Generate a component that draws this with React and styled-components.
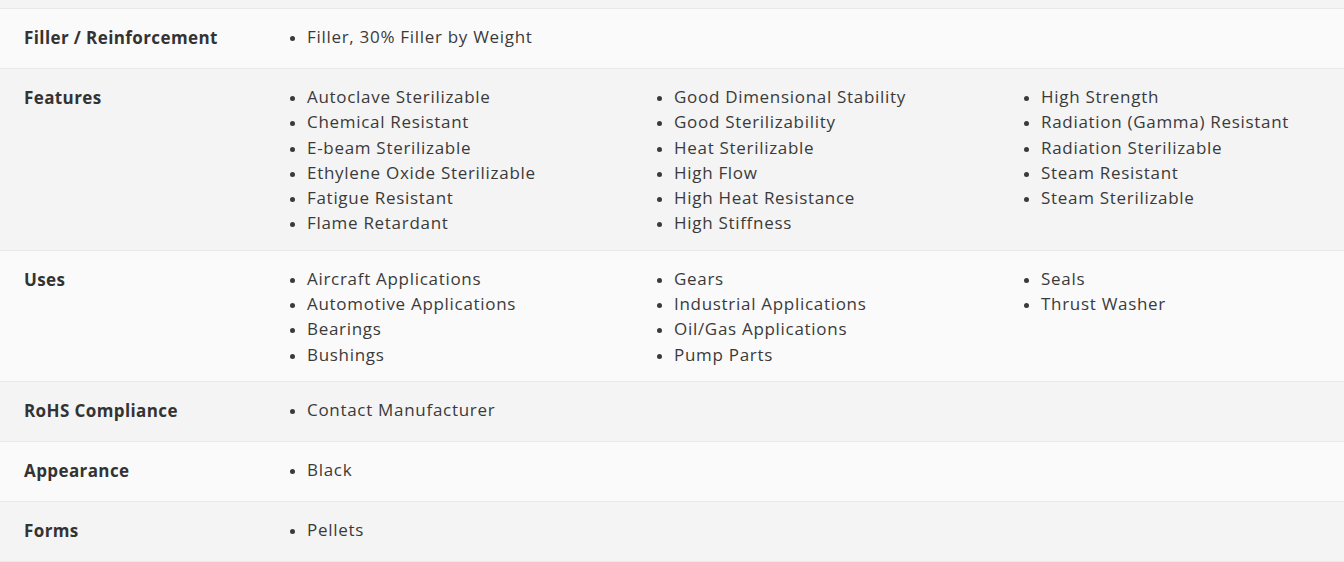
import styled, { createGlobalStyle } from "styled-components";

const Global = createGlobalStyle`
  html, body { margin: 0; padding: 0; background: #fafafa; }
  body { font-family: "Open Sans", "Liberation Sans", sans-serif; color: #363636; }
`;

const Table = styled.div`
  width: 1344px;
  display: flex;
  flex-direction: column;
`;

const Stub = styled.div`
  height: 8px;
  background: #f4f4f4;
  border-bottom: 1px solid #e9e9e9;
`;

const Row = styled.div`
  display: grid;
  grid-template-columns: 290px 1fr;
  background: ${(p) => (p.$shade ? "#f4f4f4" : "#fafafa")};
  border-bottom: 1px solid #e9e9e9;
`;

const Label = styled.div`
  padding: 15px 0 16px 24px;
  font-size: 17px;
  font-weight: 700;
  letter-spacing: 0.4px;
  line-height: 28px;
  color: #333;
`;

const Values = styled.div`
  padding: 15px 24px 14px 0;
  display: grid;
  grid-template-columns: repeat(3, 296px);
  column-gap: 71px;
`;

const List = styled.ul`
  margin: 0;
  padding-left: 17px;
  list-style: disc;
  font-size: 17px;
  letter-spacing: 0.7px;
  line-height: 25.3px;
  color: #3a3a3a;

  li::marker { font-size: 15px; }
`;

const rows = [
  { label: "Filler / Reinforcement", items: ["Filler, 30% Filler by Weight"] },
  {
    label: "Features",
    cols: [
      ["Autoclave Sterilizable", "Chemical Resistant", "E-beam Sterilizable", "Ethylene Oxide Sterilizable", "Fatigue Resistant", "Flame Retardant"],
      ["Good Dimensional Stability", "Good Sterilizability", "Heat Sterilizable", "High Flow", "High Heat Resistance", "High Stiffness"],
      ["High Strength", "Radiation (Gamma) Resistant", "Radiation Sterilizable", "Steam Resistant", "Steam Sterilizable"],
    ],
  },
  {
    label: "Uses",
    cols: [
      ["Aircraft Applications", "Automotive Applications", "Bearings", "Bushings"],
      ["Gears", "Industrial Applications", "Oil/Gas Applications", "Pump Parts"],
      ["Seals", "Thrust Washer"],
    ],
  },
  { label: "RoHS Compliance", items: ["Contact Manufacturer"] },
  { label: "Appearance", items: ["Black"] },
  { label: "Forms", items: ["Pellets"] },
];

export default function App() {
  return (
    <>
      <Global />
      <Table>
        <Stub />
        {rows.map((r, i) => (
          <Row key={r.label} $shade={i % 2 === 1}>
            <Label>{r.label}</Label>
            <Values>
              {(r.cols || [r.items]).map((col, j) => (
                <List key={j}>
                  {col.map((it) => (
                    <li key={it}>{it}</li>
                  ))}
                </List>
              ))}
            </Values>
          </Row>
        ))}
      </Table>
    </>
  );
}
